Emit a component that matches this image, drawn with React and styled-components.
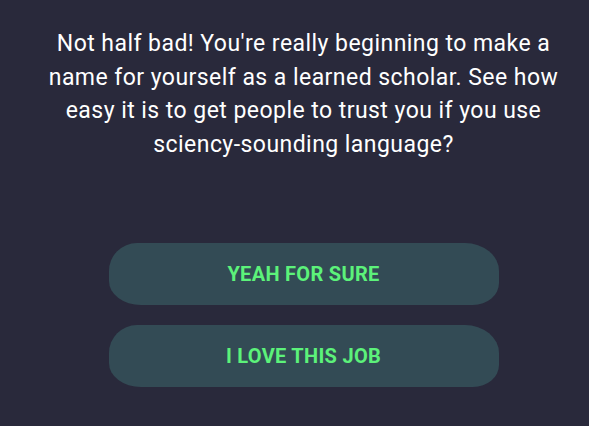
import React from "react";
import styled, { createGlobalStyle } from "styled-components";

const GlobalStyle = createGlobalStyle`
  html, body {
    margin: 0;
    padding: 0;
    background-color: #29293b;
  }
  body {
    font-family: Roboto, "Liberation Sans", sans-serif;
  }
`;

const Screen = styled.div`
  width: 589px;
  height: 426px;
  background-color: #29293b;
  display: flex;
  flex-direction: column;
  align-items: center;
  padding: 27px 0 0 18px;
  box-sizing: border-box;
`;

const Message = styled.p`
  margin: 0;
  width: 522px;
  color: #ffffff;
  font-size: 23px;
  line-height: 33.5px;
  text-align: center;
  letter-spacing: 0.45px;
`;

const Choices = styled.div`
  display: flex;
  flex-direction: column;
  gap: 20px;
  margin-top: 82px;
`;

const Choice = styled.button`
  width: 390px;
  height: 62px;
  border: none;
  background-color: #334b55;
  color: #5cf27a;
  font-family: Roboto, "Liberation Sans", sans-serif;
  font-weight: 700;
  font-size: 20px;
  letter-spacing: 0.3px;
  text-transform: uppercase;
  cursor: pointer;
  border-radius: 28px 34px 26px 32px / 28px 28px 22px 24px;
`;

export default function App() {
  return (
    <>
      <GlobalStyle />
      <Screen>
        <Message>
          Not half bad! You're really beginning to make a name for yourself as a
          learned scholar. See how easy it is to get people to trust you if you
          use sciency-sounding language?
        </Message>
        <Choices>
          <Choice>Yeah for sure</Choice>
          <Choice>I love this job</Choice>
        </Choices>
      </Screen>
    </>
  );
}
